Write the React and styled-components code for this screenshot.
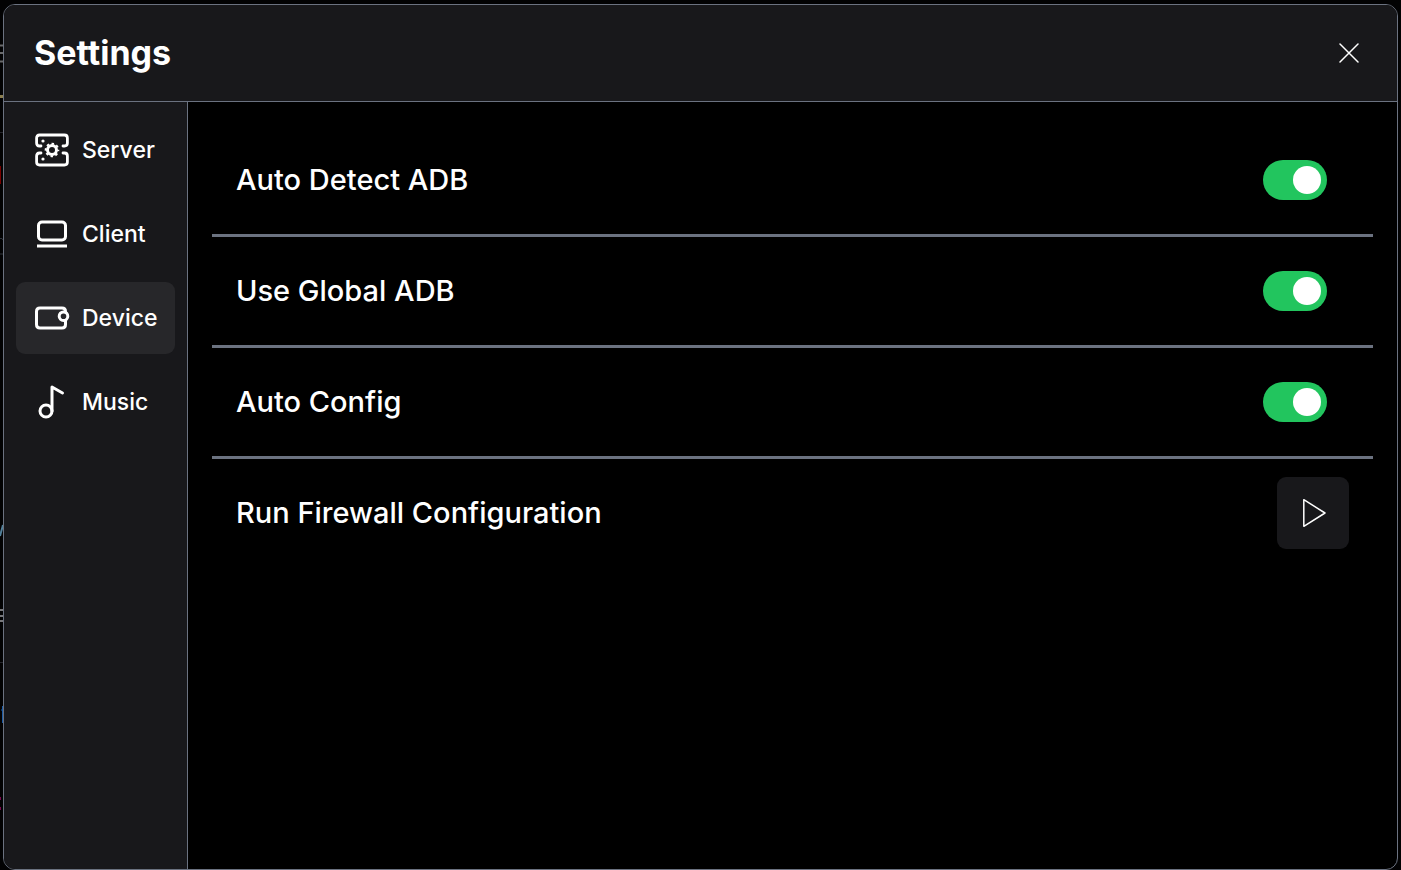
import React, { useState } from "react";
import styled, { createGlobalStyle } from "styled-components";

const GlobalStyle = createGlobalStyle`
  *, *::before, *::after { box-sizing: border-box; }
  body {
    margin: 0;
    background: #020203;
    color: #fff;
    font-family: Inter, "Liberation Sans", sans-serif;
    font-weight: 500;
  }
  button, input { font: inherit; color: inherit; }
`;

const Screen = styled.div`
  position: relative;
  display: flex;
  min-height: 100vh;
  padding: 4px 3px 0;
  overflow: hidden;
`;

const Backdrop = styled.svg`
  position: absolute;
  top: 0;
  left: 0;
  width: 3px;
  height: 870px;
`;

const Dialog = styled.section`
  position: relative;
  flex: 1;
  display: flex;
  flex-direction: column;
  border: 1px solid #6b7280;
  border-radius: 12px;
  background: #000;
  overflow: hidden;
`;

const Header = styled.header`
  display: flex;
  align-items: center;
  justify-content: space-between;
  height: 97px;
  padding: 0 30px;
  border-bottom: 1px solid #6b7280;
  background: #18181b;
`;

const Title = styled.h1`
  margin: 0;
  font-size: 34px;
  line-height: 40px;
  font-weight: 700;
`;

const CloseButton = styled.button`
  display: grid;
  place-items: center;
  width: 36px;
  height: 36px;
  padding: 0;
  border: 0;
  background: none;
  cursor: pointer;
`;

const Body = styled.div`
  flex: 1;
  display: flex;
`;

const Sidebar = styled.nav`
  display: flex;
  flex-direction: column;
  gap: 12px;
  width: 184px;
  padding: 12px;
  border-right: 1px solid #6b7280;
  background: #18181b;
`;

const NavButton = styled.button`
  display: flex;
  align-items: center;
  gap: 12px;
  height: 72px;
  padding: 0 18px;
  border: 0;
  border-radius: 9px;
  background: ${(p) => (p.$active ? "#27272a" : "transparent")};
  font-size: 23px;
  line-height: 36px;
  white-space: nowrap;
  cursor: pointer;

  svg { flex: none; }
`;

const Content = styled.main`
  flex: 1;
  min-width: 0;
  padding: 24px;
`;

const Row = styled.div`
  display: flex;
  align-items: center;
  justify-content: space-between;
  min-height: 108px;
  padding: 0 24px;
  font-size: 29px;
  line-height: 36px;

  & + & {
    min-height: 111px;
    border-top: 3px solid #6b7280;
  }
`;

const Switch = styled.input`
  appearance: none;
  display: flex;
  align-items: center;
  width: 64px;
  height: 40px;
  margin: 0 22px 0 0;
  padding: 0 6px;
  border-radius: 20px;
  background: ${(p) => (p.checked ? "#22c55e" : "#3f3f46")};
  cursor: pointer;

  &::before {
    content: "";
    width: 28px;
    height: 28px;
    margin-left: ${(p) => (p.checked ? "auto" : "0")};
    border-radius: 50%;
    background: #fff;
  }
`;

const RunButton = styled.button`
  display: grid;
  place-items: center;
  width: 72px;
  height: 72px;
  padding: 0;
  border: 0;
  border-radius: 9px;
  background: #18181b;
  cursor: pointer;
`;

const Icon = ({ children }) => (
  <svg width="36" height="36" viewBox="0 0 36 36" fill="none" stroke="currentColor"
    strokeWidth="3" strokeLinecap="round" strokeLinejoin="round" aria-hidden="true">
    {children}
  </svg>
);

const ServerIcon = () => (
  <Icon>
    <g strokeWidth="2.8">
      <path d="M7 14H5.500Q2.600 14 2.600 11V6Q2.600 3 5.600 3H30.400Q33.400 3 33.400 6V11Q33.400 14 30.500 14H29" />
      <path d="M7 21H5.500Q2.600 21 2.600 24V30Q2.600 33 5.600 33H30.400Q33.400 33 33.400 30V24Q33.400 21 30.500 21H29" />
    </g>
    <circle cx="18" cy="18" r="4.500" strokeWidth="3" />
    <circle cx="18" cy="18" r="6.300" strokeWidth="2" strokeLinecap="butt" strokeDasharray="2.474 2.474" strokeDashoffset="1.237" />
    <g fill="currentColor" stroke="none">
      <circle cx="9" cy="9" r="1.600" />
      <circle cx="9" cy="27" r="1.600" />
    </g>
  </Icon>
);

const ClientIcon = () => (
  <Icon>
    <rect x="4.500" y="6" width="27" height="18" rx="3.500" />
    <path d="M3 30H33" strokeLinecap="butt" />
  </Icon>
);

const DeviceIcon = () => (
  <Icon>
    <path d="M31.500 12V11.500Q31.500 8 28 8H6Q2.500 8 2.500 11.500V24.500Q2.500 28 6 28H28Q31.500 28 31.500 24.500V20.500" />
    <circle cx="29.500" cy="16.200" r="4.300" strokeWidth="3" fill="#27272a" />
  </Icon>
);

const MusicIcon = () => (
  <Icon>
    <circle cx="12" cy="27" r="6" />
    <path d="M18 27V3L28.500 9" />
  </Icon>
);

const CloseIcon = () => (
  <svg width="20" height="20" viewBox="0 0 20 20" stroke="currentColor" strokeWidth="1.500" strokeLinecap="round" aria-hidden="true">
    <path d="M1 1L19 19M19 1L1 19" />
  </svg>
);

const PlayIcon = () => (
  <svg width="36" height="36" viewBox="0 0 36 36" fill="none" stroke="currentColor" strokeWidth="1.500" strokeLinejoin="round" aria-hidden="true">
    <path d="M8.800 4.700V31.300L30 18Z" />
  </svg>
);

const tabs = [
  { name: "Server", icon: ServerIcon },
  { name: "Client", icon: ClientIcon },
  { name: "Device", icon: DeviceIcon },
  { name: "Music", icon: MusicIcon },
];

const options = [
  { id: "auto-detect", label: "Auto Detect ADB" },
  { id: "global-adb", label: "Use Global ADB" },
  { id: "auto-config", label: "Auto Config" },
];

export default function App() {
  const [tab, setTab] = useState("Device");
  const [values, setValues] = useState({ "auto-detect": true, "global-adb": true, "auto-config": true });

  return (
    <Screen>
      <GlobalStyle />
      <Backdrop viewBox="0 0 3 870" aria-hidden="true">
        <path d="M0 45.500H3M0 53H3M0 61.500H3" stroke="#69696b" strokeWidth="2" />
        <path d="M0 96.500H3" stroke="#8a7d4f" strokeWidth="3" />
        <path d="M0 132.500H3M0 662.500H3" stroke="#26262c" />
        <path d="M0 166V184" stroke="#780000" strokeWidth="2" />
        <path d="M0 238.500H2L3 240M0 254H3" stroke="#30343c" fill="none" />
        <path d="M3 525L0 536" stroke="#52809a" strokeWidth="2" />
        <path d="M0 610H3M0 616H3M0 621H3" stroke="#77777a" strokeWidth="2" />
        <path d="M1 710H3M2.500 706V723" stroke="#1d5ba4" />
        <path d="M0 798.500H1M0 808.500H1" stroke="#7a0750" strokeWidth="3" />
      </Backdrop>
      <Dialog role="dialog" aria-labelledby="settings-title">
        <Header>
          <Title id="settings-title">Settings</Title>
          <CloseButton type="button" aria-label="Close"><CloseIcon /></CloseButton>
        </Header>
        <Body>
          <Sidebar aria-label="Settings sections">
            {tabs.map(({ name, icon: TabIcon }) => (
              <NavButton key={name} type="button" $active={tab === name}
                aria-current={tab === name ? "page" : undefined} onClick={() => setTab(name)}>
                <TabIcon />
                {name}
              </NavButton>
            ))}
          </Sidebar>
          <Content>
            {options.map(({ id, label }) => (
              <Row key={id}>
                <label htmlFor={id}>{label}</label>
                <Switch id={id} type="checkbox" role="switch" checked={values[id]}
                  onChange={() => setValues((v) => ({ ...v, [id]: !v[id] }))} />
              </Row>
            ))}
            <Row>
              <span id="firewall-label">Run Firewall Configuration</span>
              <RunButton type="button" aria-labelledby="firewall-label"><PlayIcon /></RunButton>
            </Row>
          </Content>
        </Body>
      </Dialog>
    </Screen>
  );
}
